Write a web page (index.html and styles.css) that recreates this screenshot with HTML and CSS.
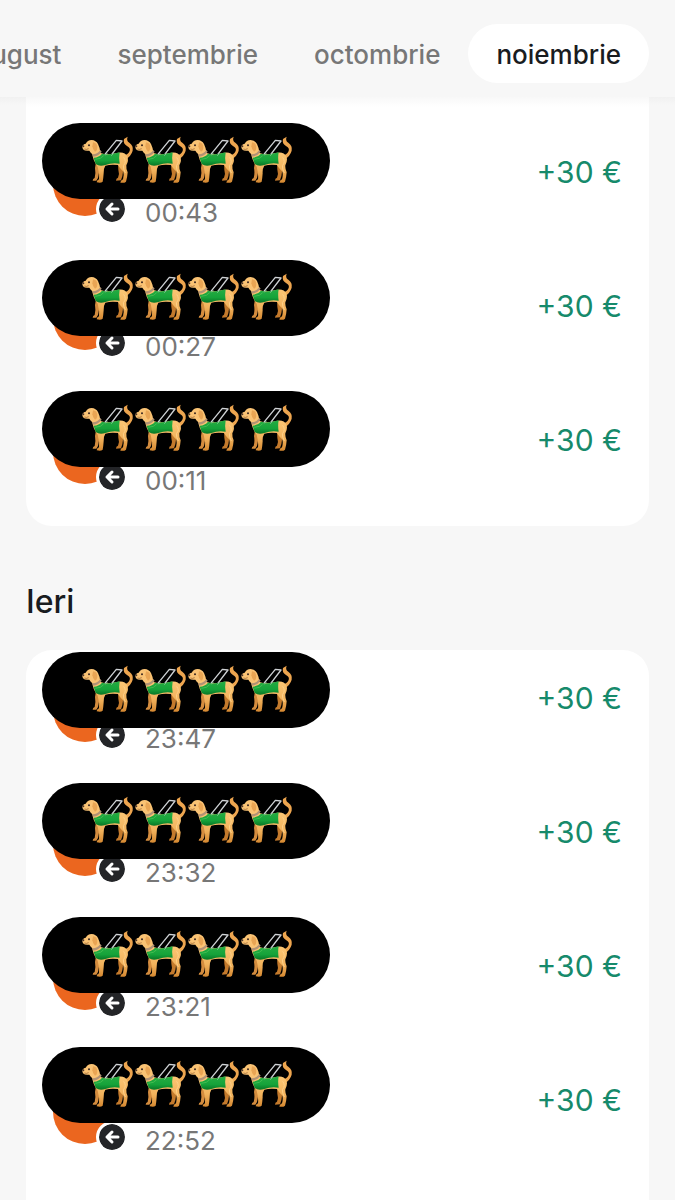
FILE: index.html
```
<!DOCTYPE html>
<html lang="ro">
<head>
    <meta charset="UTF-8">
    <meta name="viewport" content="width=device-width, initial-scale=1.0">
    <title>Tranzacții</title>
    <link rel="stylesheet" href="styles.css">
</head>
<body>
    <svg class="symbols" aria-hidden="true">
        <defs>
            <linearGradient id="fur" x1="0" y1="0" x2="0" y2="1">
                <stop offset="0" stop-color="#fcc775"/>
                <stop offset="0.6" stop-color="#f2b35d"/>
                <stop offset="1" stop-color="#d48730"/>
            </linearGradient>
            <linearGradient id="vest" x1="0" y1="0" x2="0" y2="1">
                <stop offset="0" stop-color="#26ad43"/>
                <stop offset="0.6" stop-color="#16a33a"/>
                <stop offset="1" stop-color="#087526"/>
            </linearGradient>
        </defs>
        <symbol id="dog" viewBox="18 20 159 150">
            <!-- far legs -->
            <path d="M60 98 L76 101 Q70 120 68 136 Q67 149 61 154 L50 154 Q50 148 56 146 Q60 132 57 116Z" fill="#d48c3e"/>
            <path d="M126 98 L145 106 Q138 118 141 127 Q140 142 135 153 L120 154 Q120 147 126 145 Q131 132 127 121Z" fill="#c47a2c"/>
            <!-- tail -->
            <path d="M143 79 Q156 76 161 65 Q164 56 154 51 Q140 43 144 29 L155 22 Q150 34 160 40 Q173 49 170 64 Q165 81 150 88Z" fill="#eda54f"/>
            <!-- body and near legs -->
            <path d="M48 69 Q52 64 71 70 Q94 78 119 72 Q145 64 154 81 Q159 93 151 108 Q150 119 155 129 Q154 145 150 157 Q145 162 133 160 Q133 154 141 150 Q145 137 142 127 Q132 118 126 107 Q105 104 88 109 Q82 118 83 132 Q82 147 80 157 Q75 162 62 159 Q62 153 69 150 Q71 134 65 112 Q50 93 48 69Z" fill="url(#fur)"/>
            <path d="M143 84 Q153 98 142 109 Q142 120 148 131" fill="none" stroke="#ffd18a" stroke-width="3"/>
            <!-- head -->
            <path d="M19 54 Q18 46 29 43 Q34 33 47 32 Q60 33 66 44 Q71 54 73 68 Q62 78 49 75 Q44 70 40 64 Q27 66 21 60Z" fill="#fac374"/>
            <path d="M51 39 Q63 40 64 53 Q64 65 57 67 Q50 60 49 51Z" fill="#e9a554"/>
            <path d="M25 59 Q31 62 38 58" fill="none" stroke="#8e592c" stroke-width="2"/>
            <ellipse cx="22" cy="51" rx="3" ry="3" fill="#4b3428"/>
            <circle cx="39" cy="48" r="3" fill="#3a2721"/>
            <!-- collar -->
            <path d="M49 75 Q63 76 73 62 L77 67 Q67 80 52 82Z" fill="#b19275"/>
            <!-- handle -->
            <path d="M86 76 L121 33 L138 35 L105 78" fill="none" stroke="#cfd2d5" stroke-width="4" stroke-linejoin="round"/>
            <!-- vest -->
            <path d="M53 85 Q69 84 78 73 Q98 79 131 69 Q128 84 131 103 Q109 99 88 107 Q71 113 59 104Z" fill="url(#vest)"/>
            <path d="M58 90 Q76 89 83 79" fill="none" stroke="#54c75b" stroke-width="2"/>
            <path d="M88 78 L94 71 M106 79 L112 72" fill="none" stroke="#8cc396" stroke-width="3"/>
        </symbol>
        <symbol id="arrow" viewBox="0 0 26 26">
            <circle cx="13" cy="13" r="13" fill="#242528"/>
            <path d="M19 13 H8 M13 8 L8 13 L13 18" fill="none" stroke="#fff" stroke-width="3" stroke-linecap="round" stroke-linejoin="round"/>
        </symbol>
    </svg>

    <nav class="months">
        <button class="month">august</button>
        <button class="month">septembrie</button>
        <button class="month">octombrie</button>
        <button class="month active">noiembrie</button>
    </nav>

    <main class="content">
        <section class="card today">
            <div class="row">
                <div class="avatar"><svg class="badge"><use href="#arrow"/></svg></div>
                <span class="amount">+30 €</span>
                <span class="time">00:43</span>
                <div class="cover">
                    <svg class="dog"><use href="#dog"/></svg><svg class="dog"><use href="#dog"/></svg><svg class="dog"><use href="#dog"/></svg><svg class="dog"><use href="#dog"/></svg>
                </div>
            </div>
            <div class="row">
                <div class="avatar"><svg class="badge"><use href="#arrow"/></svg></div>
                <span class="amount">+30 €</span>
                <span class="time">00:27</span>
                <div class="cover low">
                    <svg class="dog"><use href="#dog"/></svg><svg class="dog"><use href="#dog"/></svg><svg class="dog"><use href="#dog"/></svg><svg class="dog"><use href="#dog"/></svg>
                </div>
            </div>
            <div class="row">
                <div class="avatar"><svg class="badge"><use href="#arrow"/></svg></div>
                <span class="amount">+30 €</span>
                <span class="time">00:11</span>
                <div class="cover">
                    <svg class="dog"><use href="#dog"/></svg><svg class="dog"><use href="#dog"/></svg><svg class="dog"><use href="#dog"/></svg><svg class="dog"><use href="#dog"/></svg>
                </div>
            </div>
        </section>

        <h2 class="day">Ieri</h2>

        <section class="card yesterday">
            <div class="row">
                <div class="avatar"><svg class="badge"><use href="#arrow"/></svg></div>
                <span class="amount">+30 €</span>
                <span class="time">23:47</span>
                <div class="cover low">
                    <svg class="dog"><use href="#dog"/></svg><svg class="dog"><use href="#dog"/></svg><svg class="dog"><use href="#dog"/></svg><svg class="dog"><use href="#dog"/></svg>
                </div>
            </div>
            <div class="row">
                <div class="avatar"><svg class="badge"><use href="#arrow"/></svg></div>
                <span class="amount">+30 €</span>
                <span class="time">23:32</span>
                <div class="cover">
                    <svg class="dog"><use href="#dog"/></svg><svg class="dog"><use href="#dog"/></svg><svg class="dog"><use href="#dog"/></svg><svg class="dog"><use href="#dog"/></svg>
                </div>
            </div>
            <div class="row">
                <div class="avatar"><svg class="badge"><use href="#arrow"/></svg></div>
                <span class="amount">+30 €</span>
                <span class="time">23:21</span>
                <div class="cover">
                    <svg class="dog"><use href="#dog"/></svg><svg class="dog"><use href="#dog"/></svg><svg class="dog"><use href="#dog"/></svg><svg class="dog"><use href="#dog"/></svg>
                </div>
            </div>
            <div class="row">
                <div class="avatar"><svg class="badge"><use href="#arrow"/></svg></div>
                <span class="amount">+30 €</span>
                <span class="time">22:52</span>
                <div class="cover high">
                    <svg class="dog"><use href="#dog"/></svg><svg class="dog"><use href="#dog"/></svg><svg class="dog"><use href="#dog"/></svg><svg class="dog"><use href="#dog"/></svg>
                </div>
            </div>
        </section>
    </main>
</body>
</html>
```
FILE: styles.css
```
* {
    margin: 0;
    padding: 0;
    box-sizing: border-box;
}

body {
    display: flex;
    flex-direction: column;
    min-height: 100vh;
    font-family: Inter, "Liberation Sans", sans-serif;
    background-color: #f7f7f7;
    color: #191c1f;
}

.symbols {
    position: absolute;
    width: 0;
    height: 0;
}

.months {
    position: sticky;
    top: 0;
    z-index: 2;
    display: flex;
    justify-content: flex-end;
    padding: 24px 26px 14px;
    overflow: hidden;
    background-color: #f7f7f7;
}

.month {
    flex: none;
    padding: 2px 28px 0;
    border: none;
    border-radius: 30px;
    background: none;
    font-family: inherit;
    font-size: 26px;
    font-weight: 500;
    line-height: 57px;
    color: #777;
    cursor: pointer;
}

.month.active {
    background-color: #fff;
    color: #191c1f;
}

.content {
    display: flex;
    flex: 1;
    flex-direction: column;
    padding: 0 26px;
    background: linear-gradient(#f1f1f1, #f7f7f7 8px);
}

.card {
    border-radius: 26px;
    background-color: #fff;
}

.today {
    padding-top: 27px;
    border-radius: 0 0 26px 26px;
    background: linear-gradient(#f8f8f8, #fff 10px);
}

.yesterday {
    flex: 1;
    border-radius: 26px 26px 0 0;
}

.day {
    padding: 56px 0 28px;
    font-size: 32px;
    font-weight: 500;
    line-height: 40px;
}

.row {
    position: relative;
    display: grid;
    grid-template-columns: 64px 1fr auto;
    grid-template-rows: 40px 40px;
    column-gap: 28px;
    row-gap: 1px;
    padding: 28px 27px 25px;
    line-height: 40px;
}

.avatar {
    position: relative;
    grid-row: 1 / 3;
    width: 64px;
    height: 64px;
    border-radius: 50%;
    background-color: #eb661f;
}

.badge {
    position: absolute;
    right: -11px;
    bottom: -9px;
    width: 32px;
    height: 32px;
    padding: 3px;
    border-radius: 50%;
    background-color: #fff;
}

.amount {
    grid-column: 3;
    font-size: 30px;
    color: #168a6b;
}

.time {
    grid-column: 2;
    grid-row: 2;
    font-size: 26px;
    color: #777;
}

/* hides the sender */
.cover {
    position: absolute;
    top: -1px;
    left: 16px;
    display: flex;
    align-items: center;
    width: 288px;
    height: 76px;
    padding-left: 40px;
    border-radius: 38px;
    background-color: #000;
}

.cover.low {
    top: 2px;
}

.cover.high {
    top: -5px;
}

.dog {
    width: 53px;
    height: 50px;
}
```
